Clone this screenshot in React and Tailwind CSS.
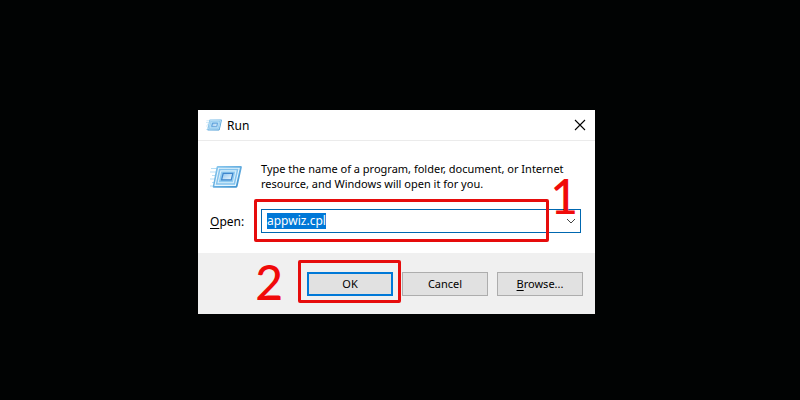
import { useEffect, useRef, useState } from "react";

const RunIcon = ({ className }) => (
  <svg viewBox="0 0 32 24" className={className} aria-hidden="true">
    <defs>
      <linearGradient id="frame" x1="0" y1="0" x2="1" y2="1">
        <stop offset="0" stopColor="#8ccaf0" />
        <stop offset="1" stopColor="#3a8fce" />
      </linearGradient>
      <linearGradient id="core" x1="0" y1="0" x2="1" y2="1">
        <stop offset="0" stopColor="#8cc3ee" />
        <stop offset="1" stopColor="#f2fafe" />
      </linearGradient>
    </defs>
    {/* Speed lines */}
    <path
      d="M1 3.5h8M0 7h7M2 10.5h5M0 14h6M2 17.5h4M0 21h5"
      stroke="#b5def5"
      strokeWidth="1.2"
    />
    <path
      d="M8 1h22.6a1.2 1.2 0 0 1 1.2 1.5l-4.2 18.7a2 2 0 0 1-2 1.6H4a1.2 1.2 0 0 1-1.2-1.5L6.5 2.3A1.6 1.6 0 0 1 8 1Z"
      fill="url(#frame)"
    />
    <path
      d="M8.6 3.2h20.6l-3.8 17.2H5Z"
      fill="#83c2ec"
      stroke="#e6f6fe"
      strokeWidth="1.1"
    />
    <path
      d="M10.8 5.9h15.2l-2.7 11.8H8.1Z"
      fill="#8fcaf0"
      stroke="#d8effc"
      strokeWidth="1.1"
    />
    <path
      d="M13.2 8.4h9.6l-1.6 6.4h-9.6Z"
      fill="url(#core)"
      stroke="#3f86cc"
      strokeWidth="1.2"
    />
  </svg>
);

const DialogButton = ({ primary, children }) => (
  <button
    type="button"
    className={`flex h-6 w-[86px] justify-center bg-[#e1e1e1] text-[11px] ${
      primary ? "border-2 border-[#0078d7] pt-0.5" : "border border-[#adadad] pt-[3px]"
    }`}
  >
    <span>{children}</span>
  </button>
);

const App = () => {
  const [command, setCommand] = useState("appwiz.cpl");
  const inputRef = useRef(null);

  useEffect(() => {
    inputRef.current.focus();
    inputRef.current.select();
  }, []);

  return (
    <main className="flex min-h-screen items-center justify-center bg-[#010303] pt-6 pr-[7px] font-['Noto_Sans','Open_Sans',sans-serif] text-xs leading-[15px] text-black">
      <section
        role="dialog"
        aria-labelledby="run-title"
        className="w-full max-w-[397px] bg-white"
      >
        {/* Title bar */}
        <header className="flex h-[31px] items-center border-b border-[#ebebeb] px-2">
          <RunIcon className="h-3 w-4" />
          <h1 id="run-title" className="ml-[5px] flex-1">
            Run
          </h1>
          <button type="button" aria-label="Close" className="p-px">
            <svg viewBox="0 0 12 12" className="size-3">
              <path d="M1 1l10 10M11 1L1 11" stroke="#000" strokeWidth="1.1" />
            </svg>
          </button>
        </header>

        <div className="px-3 py-5">
          <div className="flex gap-[19px]">
            <RunIcon className="mt-1 h-6 w-8 shrink-0" />
            <p className="flex-1 text-[11px]">
              Type the name of a program, folder, document, or Internet
              resource, and Windows will open it for you.
            </p>
          </div>

          <div className="mt-[18px] flex items-center">
            <label htmlFor="command" className="w-[51px]">
              <span className="underline underline-offset-2">O</span>pen:
            </label>
            <div className="relative mr-0.5 flex h-6 flex-1 items-center border border-[#0067b0] bg-white">
              <input
                id="command"
                ref={inputRef}
                type="text"
                value={command}
                onChange={(e) => setCommand(e.target.value)}
                className="h-4 min-w-0 flex-1 pl-[5px] leading-4 outline-none selection:bg-[#0078d7] selection:text-white"
              />
              <svg viewBox="0 0 10 6" className="mr-1 h-1.5 w-2.5">
                <path d="M1 1l4 4 4-4" fill="none" stroke="#444" />
              </svg>
              <div className="pointer-events-none absolute -top-[11px] right-[31px] -bottom-[10px] -left-2 rounded-xs border-3 border-[#e60c0c]"></div>
              <span className="pointer-events-none absolute right-0.5 bottom-4 font-[Lato,sans-serif] text-5xl leading-10 font-medium text-[#f00a0a]">
                1
              </span>
            </div>
          </div>
        </div>

        {/* Actions */}
        <footer className="flex justify-end gap-[9px] bg-[#f0f0f0] px-3 pt-[19px] pb-[18px]">
          <div className="relative">
            <DialogButton primary>OK</DialogButton>
            <div className="pointer-events-none absolute -top-3 -right-2 -bottom-[7px] -left-[9px] rounded-xs border-3 border-[#e60c0c]"></div>
            <span className="pointer-events-none absolute -top-0.5 right-full mr-6 font-[Lato,sans-serif] text-5xl leading-6 font-medium text-[#f00a0a]">
              2
            </span>
          </div>
          <DialogButton>Cancel</DialogButton>
          <DialogButton>
            <span className="underline underline-offset-2">B</span>rowse...
          </DialogButton>
        </footer>
      </section>
    </main>
  );
};

export default App;
